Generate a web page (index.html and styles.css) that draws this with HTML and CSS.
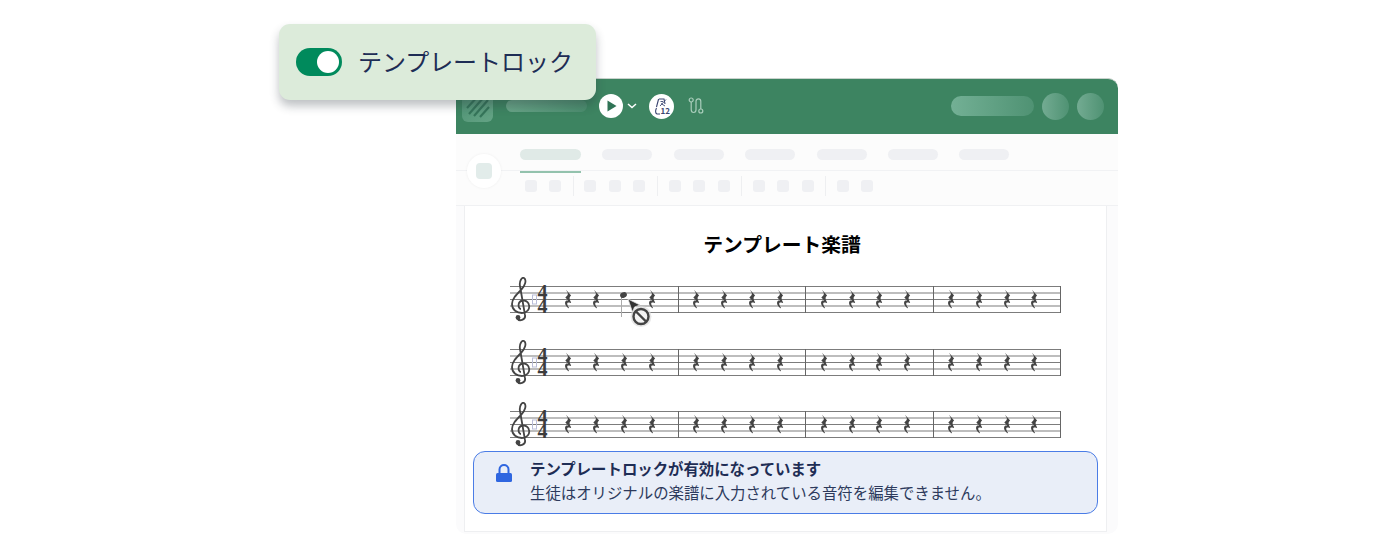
FILE: index.html
```html
<!DOCTYPE html>
<html lang="ja">
<head>
    <meta charset="UTF-8">
    <title>テンプレートロック</title>
    <link rel="stylesheet" href="styles.css">
</head>
<body>

    <!-- Toggle card, sits over the corner of the window -->
    <div class="lock-card">
        <span class="switch"><span class="knob"></span></span>
        <span class="lock-label">テンプレートロック</span>
    </div>

    <div class="window">
        <div class="topbar">
            <div class="logo">
                <svg width="31" height="31" viewBox="0 0 31 31">
                    <path d="M5 17 L17 4 M7 23 L22 6 M12 25 L26 9 M18 26 L27 16" stroke="#35755a" stroke-width="2.2" fill="none"/>
                </svg>
            </div>
            <div class="name-pill"></div>
            <div class="play-btn">
                <svg width="24" height="24" viewBox="0 0 24 24"><path d="M8.5 6.5 L17.5 12 L8.5 17.5 Z" fill="#2f7355"/></svg>
            </div>
            <svg class="chevron" width="10" height="6" viewBox="0 0 10 6"><path d="M1 1 L5 4.5 L9 1" stroke="#fff" stroke-width="1.5" fill="none"/></svg>
            <div class="metro-btn">
                <svg width="25" height="25" viewBox="0 0 25 25">
                    <path d="M10 5 H15 L16 10 M9.6 5 L7.5 13 M7.5 14 C6 17 6.5 19.5 8 20 H11" stroke="#3a4570" stroke-width="1.1" fill="none"/>
                    <path d="M11 12 L17 5.5 M11.5 7.5 H14 M12 9.5 L16 12" stroke="#3a4570" stroke-width="0.9"/>
                    <text x="11.5" y="20" class="metro-num">12</text>
                </svg>
            </div>
            <svg class="route-icon" width="16" height="18" viewBox="0 0 16 18">
                <circle cx="3.2" cy="3" r="2" stroke="#a9cdbb" stroke-width="1.2" fill="none"/>
                <circle cx="12.8" cy="14" r="2" stroke="#a9cdbb" stroke-width="1.2" fill="none"/>
                <path d="M3.2 5 V12.5 C3.2 16.5 8 16.5 8 12.5 V4.5 C8 1 12.8 1 12.8 4.5 V12" stroke="#a9cdbb" stroke-width="1.2" fill="none"/>
            </svg>
            <div class="top-right">
                <div class="account-pill"></div>
                <div class="round-btn"></div>
                <div class="round-btn"></div>
            </div>
        </div>

        <div class="ribbon">
            <div class="home-btn"><span></span></div>
            <div class="tabs">
                <span class="tab tab-active"></span>
                <span class="tab"></span>
                <span class="tab"></span>
                <span class="tab"></span>
                <span class="tab"></span>
                <span class="tab"></span>
                <span class="tab"></span>
            </div>
            <div class="tools">
                <span class="tool"></span><span class="tool"></span>
                <span class="sep"></span>
                <span class="tool"></span><span class="tool"></span><span class="tool"></span>
                <span class="sep"></span>
                <span class="tool"></span><span class="tool"></span><span class="tool"></span>
                <span class="sep"></span>
                <span class="tool"></span><span class="tool"></span><span class="tool"></span>
                <span class="sep"></span>
                <span class="tool"></span><span class="tool"></span>
            </div>
        </div>

        <div class="desk">
            <div class="page">
                <h1 class="score-title">テンプレート楽譜</h1>

                <svg class="defs" width="0" height="0">
                    <defs>
                        <path id="rest" transform="translate(1 0) scale(1.12 1)" d="M-1.8 -9.2 L2.8 -3.4 C1.2 -1.8 0.8 -0.4 2.8 3.6 L2.2 4 C0.4 3 -1.2 3.6 -0.6 5.4 C-0.3 6.6 0.4 8 1 9 L0.4 9.2 C-1.4 7.6 -3 5.4 -2.6 3.2 C-2.4 1.6 -1 1.2 0.2 1.6 L-2.4 -1.6 C-0.8 -3 0.4 -4.6 -0.2 -6 Z" fill="#444"/>
                        <g id="staff">
                            <path d="M1 9.5 H551 M1 16 H551 M1 22.5 H551 M1 29 H551 M1 35.5 H551" stroke="#7c7c7c" stroke-width="1.2"/>
                            <path d="M169.5 9 V36 M296.5 9 V36 M424.5 9 V36 M551.5 9 V36" stroke="#666" stroke-width="1"/>
                            <path d="M16 38 L11 9 C10 4 13 0 15 1 C18 3 16 9 12 13 C7 18 3 22 3 27 C3 33 8 36 13 36 C18 36 21 32 20 28 C19 23 12 22 10 26 C9 29 10 32 12 32 M16 38 C17 43 10 45 8 41" stroke="#444" stroke-width="1.8" fill="none"/>
                            <circle cx="9" cy="40.5" r="2.4" fill="#444"/>
                            <rect x="23.5" y="18" width="4" height="9" fill="none" stroke="#b9bdd8" stroke-width="1"/>
                            <text x="28.5" y="22" class="time-sig">4</text>
                            <text x="28.5" y="35.5" class="time-sig">4</text>
                            <use href="#rest" x="58" y="22"/><use href="#rest" x="86" y="22"/><use href="#rest" x="142" y="22"/>
                            <use href="#rest" x="186" y="22"/><use href="#rest" x="214" y="22"/><use href="#rest" x="242" y="22"/><use href="#rest" x="270" y="22"/>
                            <use href="#rest" x="314" y="22"/><use href="#rest" x="342" y="22"/><use href="#rest" x="369" y="22"/><use href="#rest" x="397" y="22"/>
                            <use href="#rest" x="441" y="22"/><use href="#rest" x="469" y="22"/><use href="#rest" x="497" y="22"/><use href="#rest" x="524" y="22"/>
                        </g>
                    </defs>
                </svg>

                <div class="staves">
                    <svg class="staff" width="552" height="46" viewBox="0 0 552 46">
                        <use href="#staff"/>
                        <path d="M112.5 20 V40" stroke="#aaa" stroke-width="1"/>
                        <ellipse cx="114.5" cy="18" rx="3.5" ry="2.7" fill="#444" transform="rotate(-25 114.5 18)"/>
                    </svg>
                    <svg class="staff" width="552" height="46" viewBox="0 0 552 46">
                        <use href="#staff"/>
                        <use href="#rest" x="114" y="22"/>
                    </svg>
                    <svg class="staff" width="552" height="46" viewBox="0 0 552 46">
                        <use href="#staff"/>
                        <use href="#rest" x="114" y="22"/>
                    </svg>
                </div>

                <div class="notice">
                    <svg class="notice-icon" width="16" height="18" viewBox="0 0 16 18">
                        <path d="M3.5 10 V5.5 C3.5 -0.5 12.5 -0.5 12.5 5.5 V10" stroke="#2f66e0" stroke-width="2" fill="none"/>
                        <rect x="0" y="9" width="16" height="9" rx="1.5" fill="#2f66e0"/>
                    </svg>
                    <div class="notice-text">
                        <strong>テンプレートロックが有効になっています</strong>
                        <p>生徒はオリジナルの楽譜に入力されている音符を編集できません。</p>
                    </div>
                </div>
            </div>
        </div>

        <!-- Not-allowed cursor over the note -->
        <svg class="cursor" width="28" height="34" viewBox="0 0 28 34">
            <circle cx="15" cy="19.5" r="10.5" fill="#ddd" opacity="0.7"/>
            <path d="M2 2 L14 8 L8.5 10 L6.5 15 Z" fill="#333" stroke="#ddd" stroke-width="0.8"/>
            <circle cx="15" cy="19.5" r="7.5" fill="#f4f4f4" stroke="#444" stroke-width="2.4"/>
            <path d="M10 14.5 L20 24.5" stroke="#444" stroke-width="2.4"/>
        </svg>
    </div>

</body>
</html>
```

FILE: styles.css
```css
body, html {
    margin: 0;
    padding: 0;
    height: 100%;
    overflow: hidden;
    background-color: white;
    font-family: "Noto Sans CJK JP", "Noto Sans", sans-serif;
}

body {
    position: relative;
}

/* Toggle card */
.lock-card {
    position: absolute;
    left: 279px;
    top: 24px;
    z-index: 5;
    box-sizing: border-box;
    width: 317px;
    height: 76px;
    padding-left: 17px;
    display: flex;
    align-items: center;
    gap: 16px;
    background-color: #dcebda;
    border-radius: 11px;
    box-shadow: 0 6px 10px rgba(40, 50, 60, 0.3);
}

.switch {
    box-sizing: border-box;
    width: 46px;
    height: 28px;
    padding: 3px;
    display: flex;
    justify-content: flex-end;
    background-color: #008a5c;
    border-radius: 14px;
}

.knob {
    width: 22px;
    height: 22px;
    background-color: white;
    border-radius: 50%;
}

.lock-label {
    padding-bottom: 2px;
    font-size: 24px;
    line-height: 28px;
    letter-spacing: -0.05px;
    color: #1e2d55;
}

/* App window */
.window {
    position: absolute;
    left: 456px;
    top: 78px;
    width: 662px;
    height: 456px;
    display: flex;
    flex-direction: column;
    background-color: #fbfbfc;
    border-radius: 10px;
}

.topbar {
    height: 56px;
    flex-shrink: 0;
    box-sizing: border-box;
    padding-left: 6px;
    padding-right: 14px;
    padding-bottom: 1px;
    display: flex;
    align-items: center;
    background-color: #3d8461;
    border-top: 1px solid #c9d3cd;
    border-radius: 10px 10px 0 0;
}

.logo {
    width: 31px;
    height: 31px;
    background: linear-gradient(135deg, #4e9273, #64a385);
    border-radius: 6px;
}

.logo svg {
    display: block;
}

.name-pill {
    width: 81px;
    height: 12px;
    margin-left: 13px;
    background: linear-gradient(90deg, #68a487, #4b8d6e);
    border-radius: 6px;
}

.play-btn {
    width: 24px;
    height: 24px;
    margin-left: 12px;
    background-color: white;
    border-radius: 50%;
}

.play-btn svg, .metro-btn svg {
    display: block;
}

.chevron {
    margin-left: 4px;
}

.metro-btn {
    width: 25px;
    height: 25px;
    margin-left: 12px;
    background-color: white;
    border-radius: 50%;
}

.metro-num {
    font-size: 8px;
    font-weight: 700;
    fill: #3a4570;
}

.route-icon {
    margin-left: 14px;
}

.top-right {
    margin-left: auto;
    display: flex;
    align-items: center;
    gap: 8px;
}

.account-pill {
    width: 83px;
    height: 20px;
    background: linear-gradient(90deg, #73b095, #4f9273);
    border-radius: 10px;
}

.round-btn {
    width: 27px;
    height: 27px;
    background: linear-gradient(90deg, #73ab92, #4f9273);
    border-radius: 50%;
}

/* Ribbon */
.ribbon {
    position: relative;
    height: 72px;
    flex-shrink: 0;
    box-sizing: border-box;
    background-color: #fcfcfc;
    border-bottom: 1px solid #f0f1f3;
}

.home-btn {
    position: absolute;
    left: 11px;
    top: 20px;
    width: 34px;
    height: 34px;
    display: flex;
    align-items: center;
    justify-content: center;
    background-color: white;
    border-radius: 50%;
    box-shadow: 0 0 3px rgba(0, 0, 0, 0.06);
}

.home-btn span {
    width: 16px;
    height: 16px;
    background-color: #e2ecea;
    border-radius: 4px;
}

.tabs {
    box-sizing: border-box;
    height: 37px;
    padding-left: 64px;
    padding-top: 15px;
    display: flex;
    gap: 21.4px;
    border-bottom: 1px solid #f1f2f4;
}

.tab {
    position: relative;
    width: 50px;
    height: 11px;
    background-color: #eff0f3;
    border-radius: 6px;
}

.tab-active {
    width: 61px;
    background-color: #e0eae7;
}

.tab-active::after {
    content: "";
    position: absolute;
    left: 0;
    right: 0;
    top: 22px;
    height: 2px;
    background-color: #93c2ad;
}

.tools {
    padding-left: 68.7px;
    padding-top: 5px;
    display: flex;
    align-items: center;
    gap: 12.56px;
}

.tool {
    width: 12px;
    height: 12px;
    background-color: #eff0f3;
    border-radius: 3px;
}

.sep {
    width: 1px;
    height: 20px;
    margin-right: -2px;
    margin-left: -1px;
    background-color: #eeeff1;
}

/* Score page */
.desk {
    flex: 1;
    display: flex;
    padding-left: 8px;
    padding-right: 11px;
    padding-bottom: 2px;
}

.page {
    flex: 1;
    box-sizing: border-box;
    padding-top: 24px;
    background-color: white;
    border-left: 1px solid #eeeff1;
    border-right: 1px solid #eeeff1;
    border-bottom: 1px solid #eeeff1;
}

.score-title {
    margin: 0;
    padding-right: 7px;
    font-size: 19.8px;
    line-height: 28px;
    font-weight: 700;
    text-align: center;
    color: black;
}

.defs {
    position: absolute;
}

.staves {
    margin-top: 19px;
    padding-left: 44px;
    display: flex;
    flex-direction: column;
    gap: 16.5px;
}

.staff {
    display: block;
}

.time-sig {
    font-family: "Liberation Serif", serif;
    font-size: 20px;
    font-weight: 700;
    fill: #3c3c3c;
}

.notice {
    box-sizing: border-box;
    width: 625px;
    height: 63px;
    margin-top: 3px;
    margin-left: 8px;
    padding-left: 22px;
    padding-top: 4px;
    display: flex;
    gap: 18px;
    background-color: #e9eef8;
    border: 1px solid #4a7ce6;
    border-radius: 12px;
}

.notice-icon {
    margin-top: 8px;
}

.notice-text {
    color: #1e2d55;
    font-size: 15.4px;
    line-height: 24px;
}

.notice-text p {
    margin: 0;
    color: #2d3a5c;
}

.cursor {
    position: absolute;
    left: 170px;
    top: 219px;
}
```
